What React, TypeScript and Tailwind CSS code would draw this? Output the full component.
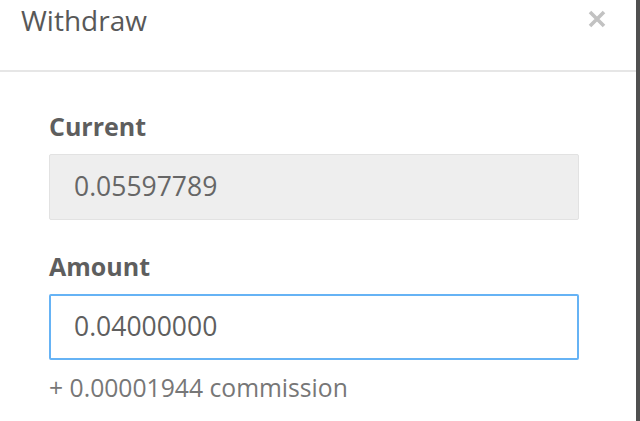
const Field = ({ label, value, active }: { label: string; value: string; active?: boolean }) => {
  return (
    <div className="flex flex-col">
      <div className="text-[25px] leading-[34px] font-bold text-[#5e5e5e] mb-[11px]">{label}</div>
      <div
        className={
          active
            ? "h-[66px] flex items-center pl-[23px] rounded-[2px] border-2 border-[#66b3f5] bg-white text-[26.5px] text-[#5f5f5f]"
            : "h-[66px] flex items-center pl-[24px] rounded-[2px] border border-[#e2e2e2] bg-[#eeeeee] text-[26.5px] text-[#666666]"
        }
      >
        {value}
      </div>
    </div>
  );
};

const App = () => {
  return (
    <div className="flex w-[640px] h-[421px] bg-white font-['Open_Sans',sans-serif] overflow-hidden">
      <div className="flex flex-col w-[636px]">
        <div className="h-[72px] flex justify-between px-[21px] pt-[1px] border-b-2 border-[#e6e6e6]">
          <div className="text-[28px] leading-[38px] text-[#585858]">Withdraw</div>
          <svg width="18" height="18" viewBox="0 0 18 18" className="mt-[9px] mr-[9px]">
            <path d="M2 2 L16 16 M16 2 L2 16" stroke="#c2c2c2" strokeWidth="3.6" strokeLinecap="butt" />
          </svg>
        </div>
        <div className="flex flex-col pt-[37px] pl-[49px] pr-[57px]">
          <Field label="Current" value="0.05597789" />
          <div className="h-[29px]" />
          <Field label="Amount" value="0.04000000" active />
          <div className="mt-[11px] text-[24.7px] leading-[34px] text-[#777777]">+ 0.00001944 commission</div>
        </div>
      </div>
      <div className="w-[4px] h-full bg-[#505050]" />
    </div>
  );
};

export default App;
